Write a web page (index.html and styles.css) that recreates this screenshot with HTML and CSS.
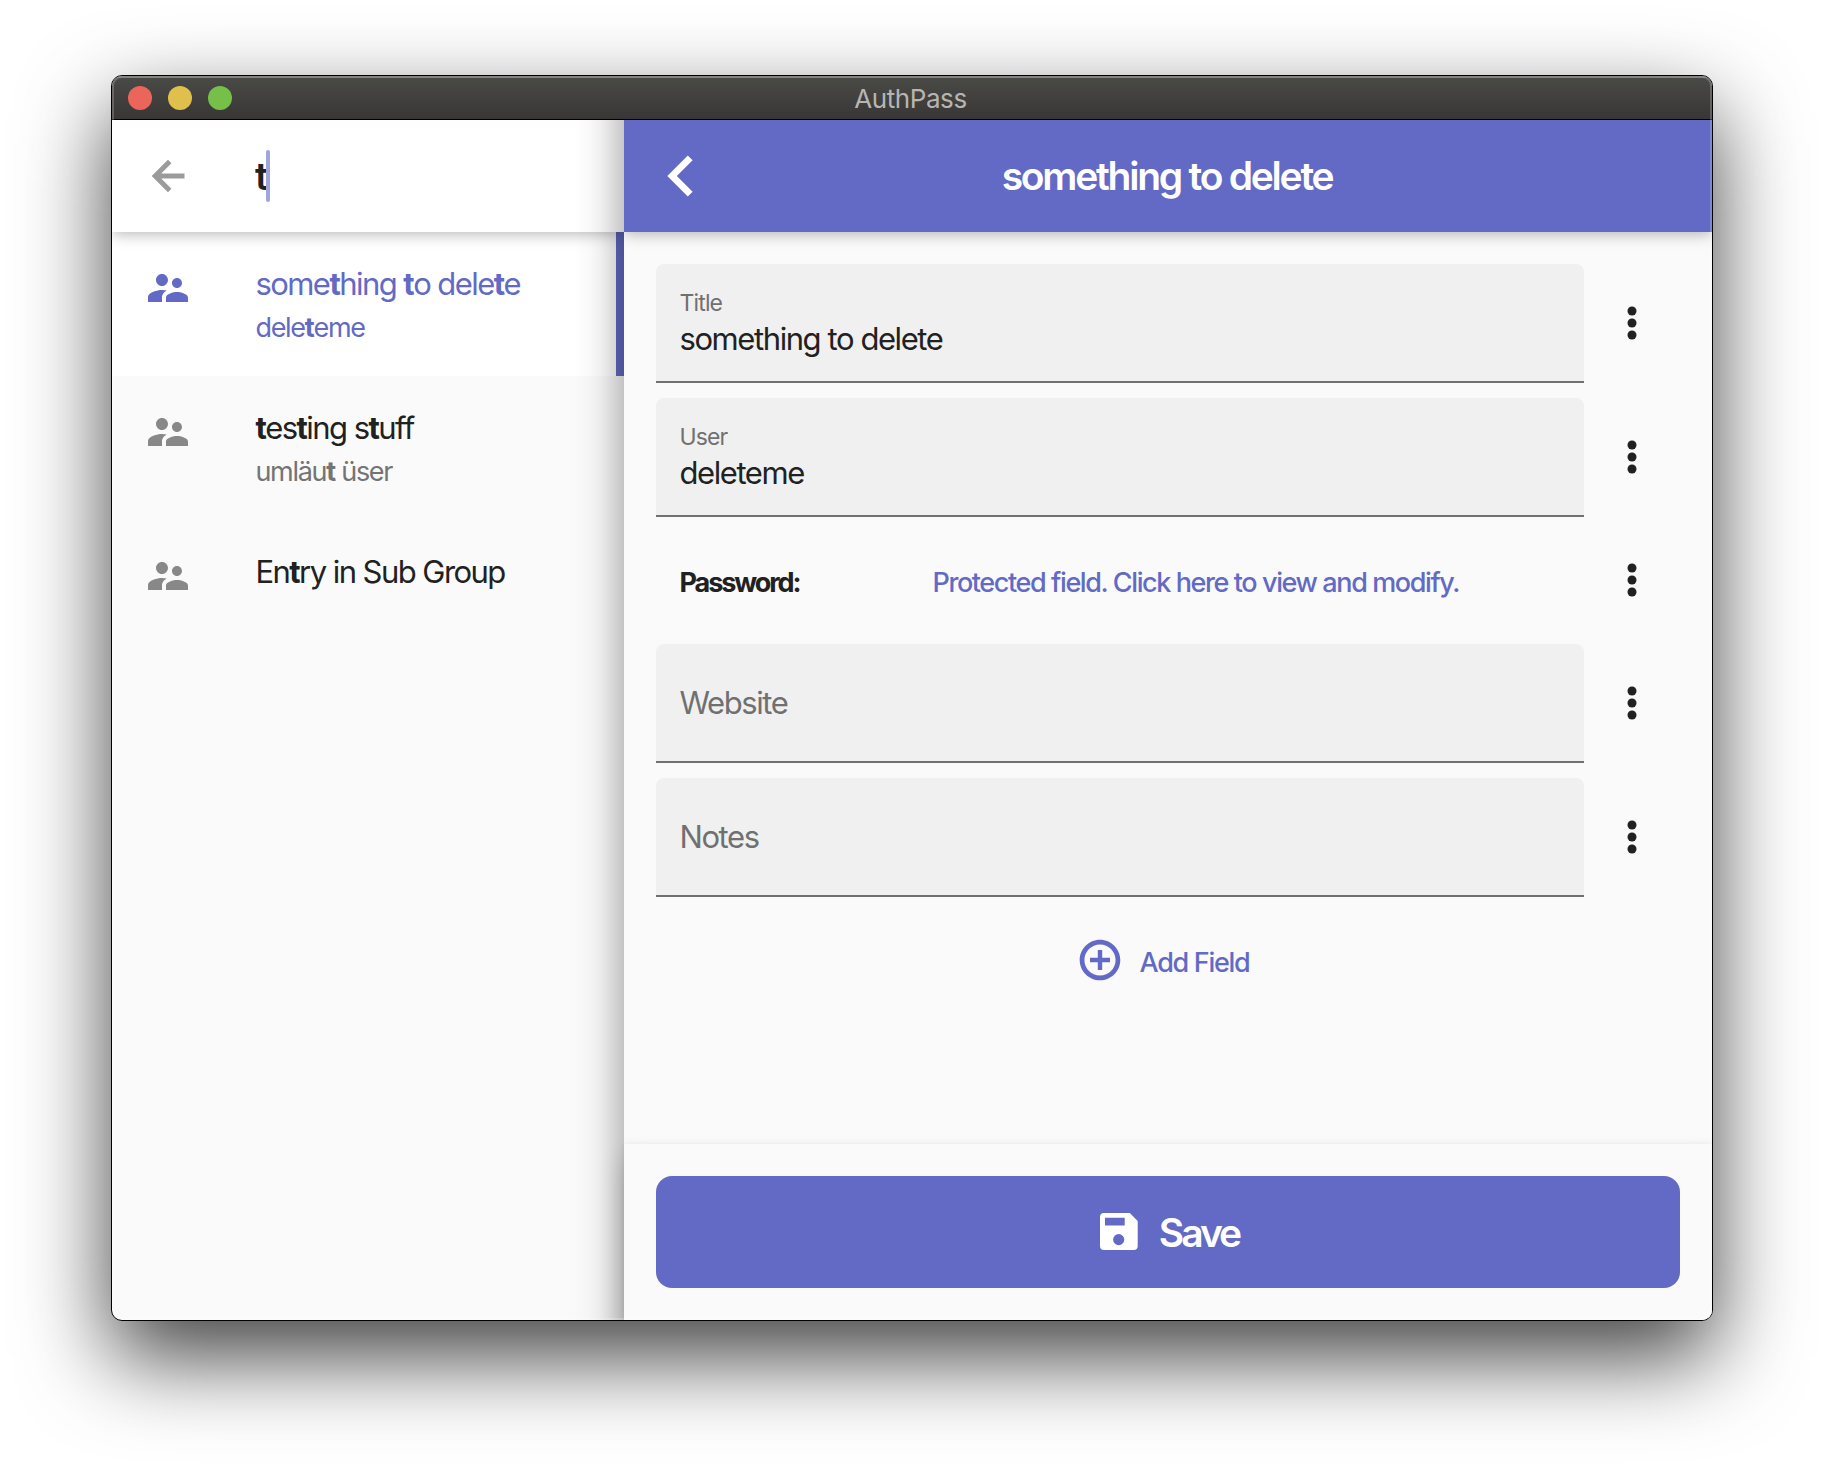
FILE: index.html
```html
<!DOCTYPE html>
<html lang="en">
<head>
<meta charset="utf-8">
<title>AuthPass</title>
<link rel="stylesheet" href="styles.css">
</head>
<body>
<svg class="defs" aria-hidden="true">
  <symbol id="people" viewBox="0 0 24 24"><path d="M16.5 12c1.38 0 2.49-1.12 2.49-2.5S17.88 7 16.5 7 14 8.12 14 9.5s1.12 2.5 2.5 2.5zM9 11c1.66 0 2.99-1.34 2.99-3S10.66 5 9 5 6 6.34 6 8s1.34 3 3 3zm7.5 3c-1.83 0-5.5.92-5.5 2.75V19h11v-2.25c0-1.83-3.67-2.75-5.5-2.75zM9 13c-2.33 0-7 1.17-7 3.5V19h7v-2.25c0-.85.33-2.34 2.37-3.47C10.5 13.1 9.66 13 9 13z"/></symbol>
  <symbol id="more" viewBox="0 0 48 48"><circle cx="24" cy="12" r="4.5"/><circle cx="24" cy="24" r="4.5"/><circle cx="24" cy="36" r="4.5"/></symbol>
</svg>
<main class="window">
  <header class="titlebar">
    <span class="light light-close"></span>
    <span class="light light-minimize"></span>
    <span class="light light-zoom"></span>
    <span class="window-title">AuthPass</span>
  </header>
  <div class="content">
    <section class="list-pane">
      <div class="search-bar">
        <svg class="icon back-arrow" viewBox="0 0 48 48"><path d="M25.7 9.6 11.2 24l14.5 14.4M11.5 24h29"/></svg>
        <span class="query">t</span><span class="caret"></span>
      </div>
      <article class="entry selected">
        <svg class="icon"><use href="#people"/></svg>
        <div class="entry-text">
          <div class="entry-title">some<b>t</b>hing <b>t</b>o dele<b>t</b>e</div>
          <div class="entry-sub">dele<b>t</b>eme</div>
        </div>
      </article>
      <article class="entry">
        <svg class="icon"><use href="#people"/></svg>
        <div class="entry-text">
          <div class="entry-title"><b>t</b>es<b>t</b>ing s<b>t</b>uff</div>
          <div class="entry-sub">umläu<b>t</b> üser</div>
        </div>
      </article>
      <article class="entry">
        <svg class="icon"><use href="#people"/></svg>
        <div class="entry-text">
          <div class="entry-title">En<b>t</b>ry in Sub Group</div>
        </div>
      </article>
    </section>
    <section class="detail-pane">
      <div class="app-bar">
        <svg class="chevron" viewBox="0 0 26 42"><path d="M20.8.5 25.6 5.2 9.8 21l15.8 15.8-4.8 4.7L.3 21z"/></svg>
        <h1>something to delete</h1>
      </div>
      <div class="form">
        <div class="row">
          <div class="field"><label>Title</label><div class="value">something to delete</div></div>
          <svg class="icon more"><use href="#more"/></svg>
        </div>
        <div class="row">
          <div class="field"><label>User</label><div class="value">deleteme</div></div>
          <svg class="icon more"><use href="#more"/></svg>
        </div>
        <div class="row password-row">
          <div class="password"><span class="password-label">Password:</span><a class="reveal">Protected field. Click here to view and modify.</a></div>
          <svg class="icon more"><use href="#more"/></svg>
        </div>
        <div class="row">
          <div class="field empty">Website</div>
          <svg class="icon more"><use href="#more"/></svg>
        </div>
        <div class="row">
          <div class="field empty">Notes</div>
          <svg class="icon more"><use href="#more"/></svg>
        </div>
      </div>
      <div class="add-field">
        <svg class="icon" viewBox="0 0 24 24"><path d="M13.1 7h-2.2v3.9H7v2.2h3.9V17h2.2v-3.9H17v-2.2h-3.9V7zM12 1.85C6.4 1.85 1.85 6.4 1.85 12S6.4 22.15 12 22.15 22.15 17.6 22.15 12 17.6 1.85 12 1.85zm0 17.95c-4.3 0-7.8-3.5-7.8-7.8S7.7 4.2 12 4.2s7.8 3.5 7.8 7.8-3.5 7.8-7.8 7.8z"/></svg>
        <span>Add Field</span>
      </div>
      <footer class="footer">
        <button class="save" type="button">
          <svg class="save-icon" viewBox="0 0 38 37"><path fill-rule="evenodd" d="M4 0h25.8L37.7 7.9V33a4 4 0 0 1-4 4H4a4 4 0 0 1-4-4V4a4 4 0 0 1 4-4zM5 4.8v7.6h19.7V4.8zM18.7 21a5.6 5.6 0 1 0 0 11.2 5.6 5.6 0 0 0 0-11.2z"/></svg>
          <span>Save</span>
        </button>
      </footer>
    </section>
  </div>
</main>
</body>
</html>
```
FILE: styles.css
```css
* { box-sizing: border-box; }

body {
  margin: 0;
  height: 1468px;
  padding: 75px 111px 0;
  overflow: hidden;
  background: #fff;
  color: #212121;
  font-family: Inter, "Liberation Sans", sans-serif;
}

.defs { position: absolute; width: 0; height: 0; }

.window {
  position: relative;
  width: 1602px;
  height: 1246px;
  border: 1px solid #000;
  border-radius: 11px;
  box-shadow: 0 36px 88px rgba(0, 0, 0, .75);
  display: flex;
  flex-direction: column;
  overflow: hidden;
  background: #fafafa;
}

/* thin light rim inside the window edge */
.window::after {
  content: "";
  position: absolute;
  inset: 0;
  z-index: 3;
  border-radius: 10px;
  box-shadow: inset 0 0 0 2px rgba(255, 255, 255, .2);
  pointer-events: none;
}

.titlebar {
  position: relative;
  display: flex;
  align-items: flex-start;
  gap: 16px;
  height: 44px;
  padding: 10px 16px 0;
  border-bottom: 1px solid #000;
  background: linear-gradient(#4a4a47, #383735);
  box-shadow: inset 0 2px rgba(255, 255, 255, .16);
}

.light { width: 24px; height: 24px; border-radius: 50%; }
.light-close { background: #ec655b; }
.light-minimize { background: #e0c04d; }
.light-zoom { background: #76c04a; }

.window-title {
  position: absolute;
  inset: 0;
  padding-right: 3px;
  text-align: center;
  font-size: 26px;
  line-height: 45px;
  letter-spacing: -.43px;
  color: #b5b5b3;
}

.content { display: flex; flex: 1; }

.icon { width: 48px; height: 48px; flex: none; fill: currentColor; }

.list-pane { position: relative; width: 512px; }

/* shade cast by the detail pane */
.list-pane::after {
  content: "";
  position: absolute;
  z-index: 2;
  top: 0;
  right: 0;
  bottom: 0;
  width: 50px;
  background: linear-gradient(to left, rgba(0, 0, 0, .22), rgba(0, 0, 0, .165) 8px, rgba(0, 0, 0, .105) 16px, rgba(0, 0, 0, .06) 24px, rgba(0, 0, 0, .025) 34px, transparent);
}

.search-bar {
  position: relative;
  z-index: 1;
  display: flex;
  align-items: center;
  height: 112px;
  padding-left: 32px;
  background: #fff;
  box-shadow: 0 2px 14px rgba(0, 0, 0, .29);
  clip-path: inset(0 0 -30px 0);
}

.back-arrow { fill: none; stroke: #9b9b9b; stroke-width: 5; }

.query {
  width: 11px;
  margin-left: 63px;
  font-size: 38px;
  font-weight: 600;
}

.caret { width: 4px; height: 52px; border-radius: 2px; background: #a1a5dd; }

.entry {
  display: flex;
  gap: 63.4px;
  height: 144px;
  padding: 32px 0 0 32px;
  color: #212121;
}
.entry .icon { fill: #888; }
.entry-text { padding-top: 2px; white-space: nowrap; }
.entry-title { font-size: 31px; line-height: 36px; letter-spacing: -1.55px; }
.entry-sub { margin-top: 10px; font-size: 27px; line-height: 32px; letter-spacing: -1.28px; color: #747474; }

.selected { background: #fff; border-right: 8px solid #626ac5; }
.selected, .selected .entry-sub { color: #626ac5; }
.selected .icon { fill: #626ac5; }

.detail-pane {
  position: relative;
  z-index: 1;
  display: flex;
  flex-direction: column;
  flex: 1;
  background: #fafafa;
}

.app-bar {
  display: flex;
  align-items: center;
  height: 112px;
  padding: 0 43px;
  background: #626ac5;
  color: #fff;
  box-shadow: 0 2px 14px rgba(0, 0, 0, .29);
  clip-path: inset(0 0 -30px 0);
}
.chevron { width: 26px; height: 42px; margin-right: -26px; fill: currentColor; }
.app-bar h1 {
  flex: 1;
  margin: 0;
  padding: 0 2px 2px 0;
  text-align: center;
  font-size: 39px;
  font-weight: 600;
  letter-spacing: -2.25px;
}

.form {
  display: flex;
  flex-direction: column;
  gap: 15px;
  padding: 32px 32px 0;
}
.row { display: flex; align-items: center; height: 119px; }
.more { margin: 0 24px 2px; }

.field {
  flex: 1;
  height: 119px;
  padding: 25px 23.5px 0;
  border-bottom: 2px solid #707070;
  border-radius: 8px 8px 0 0;
  background: #f0f0f0;
  font-size: 31px;
  line-height: 36px;
  letter-spacing: -1.42px;
}
.field label {
  display: block;
  margin-bottom: 4px;
  font-size: 23px;
  line-height: 28px;
  letter-spacing: -.85px;
  color: #707070;
}
.empty { padding-top: 41px; color: #707070; }

.password-row { height: 97px; }
.password {
  display: flex;
  flex: 1;
  padding: 5px 0 0 23.5px;
  font-size: 27px;
  line-height: 32px;
  white-space: nowrap;
}
.password-label { width: 128px; font-weight: 700; letter-spacing: -2.07px; }
.reveal { flex: 1; text-align: center; font-weight: 500; letter-spacing: -1.4px; color: #626ac5; }

.add-field {
  display: flex;
  justify-content: center;
  align-items: center;
  gap: 16px;
  margin-top: 39px;
  padding-right: 11px;
  font-size: 27px;
  font-weight: 500;
  letter-spacing: -1.3px;
  color: #626ac5;
}
.add-field span { padding-top: 5px; }

.footer {
  height: 176px;
  margin-top: auto;
  padding: 32px;
  background: #fafafa;
  box-shadow: 0 0 6px rgba(0, 0, 0, .07), 0 16px 24px rgba(0, 0, 0, .16);
}
.save {
  display: flex;
  justify-content: center;
  align-items: center;
  gap: 21px;
  width: 100%;
  height: 112px;
  padding: 0 0 2px 3px;
  border: 0;
  border-radius: 16px;
  background: #626ac5;
  color: #fff;
  font: 600 39px Inter, "Liberation Sans", sans-serif;
  letter-spacing: -3px;
}
.save-icon { width: 38px; height: 37px; fill: currentColor; }
.save span { padding-top: 2px; }
```
